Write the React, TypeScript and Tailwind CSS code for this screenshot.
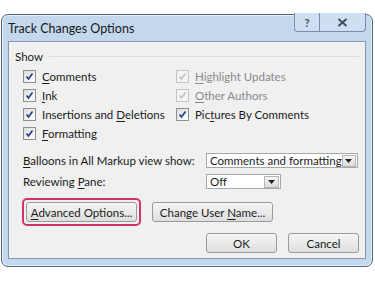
const font = { fontFamily: 'Lato, "Open Sans", sans-serif' };

function Check({ disabled }: { disabled?: boolean }) {
  return (
    <span
      className={
        "flex h-[13px] w-[13px] shrink-0 items-center justify-center border " +
        (disabled
          ? "border-[#c4c4c4] bg-[#f4f4f4]"
          : "border-[#8e8f8f] bg-gradient-to-br from-[#dcdcdc] to-[#ffffff]")
      }
    >
      <svg width="9" height="9" viewBox="0 0 9 9">
        <path
          d="M1.5 4.5 L3.5 7 L7.5 1.5"
          fill="none"
          stroke={disabled ? "#c2c2c2" : "#1e3a8a"}
          strokeWidth="1.6"
        />
      </svg>
    </span>
  );
}

function Row({
  pre,
  u,
  post,
  disabled,
}: {
  pre: string;
  u: string;
  post: string;
  disabled?: boolean;
}) {
  return (
    <div className="flex h-[19px] items-center gap-[6px] whitespace-nowrap">
      <Check disabled={disabled} />
      <span className={disabled ? "text-[#8a8a8a]" : "text-[#1b1b1b]"}>
        {pre}
        <span className="underline underline-offset-2">{u}</span>
        {post}
      </span>
    </div>
  );
}

function Btn({ children, className }: { children: React.ReactNode; className?: string }) {
  return (
    <button
      className={
        "flex h-[20px] items-center justify-center whitespace-nowrap rounded-[3px] border border-[#9a9a9a] bg-gradient-to-b from-[#f6f6f6] to-[#dedede] text-[#1b1b1b] " +
        (className ?? "")
      }
    >
      {children}
    </button>
  );
}

function Drop({ value, w }: { value: string; w: string }) {
  return (
    <div className={"flex h-[15px] items-center justify-between whitespace-nowrap border border-[#a7a7a7] bg-white pl-[3px] " + w}>
      <span className="leading-none">{value}</span>
      <span className="mr-[1px] flex h-[12px] w-[15px] items-center justify-center border border-[#b5b5b5] bg-gradient-to-b from-[#f4f4f4] to-[#dcdcdc]">
        <svg width="7" height="4" viewBox="0 0 7 4">
          <path d="M0 0 H7 L3.5 4 Z" fill="#222" />
        </svg>
      </span>
    </div>
  );
}

export default function App() {
  return (
    <div className="h-[281px] w-[375px] bg-white pl-[1px] pt-[14px] text-[11.5px] leading-[15px]" style={font}>
      <div className="flex h-[253px] w-[372px] flex-col rounded-[7px] border border-[#55657a] bg-[#c3d7ed] px-[6px] pb-[7px] shadow-[inset_0_0_0_1px_#e6eef8]">
        <div className="relative flex h-[26px] shrink-0 items-center pl-[0px] pt-[1px]">
          <span className="text-[12.5px] text-[#1a1a1a]">Track Changes Options</span>
          <div className="absolute right-[0px] top-[-2px] flex h-[19px]">
            <span className="flex w-[26px] items-center justify-center rounded-bl-[4px] border border-t-0 border-[#7c8ea5] bg-[#cfdff1] text-[11px] font-bold text-[#39475a]">
              ?
            </span>
            <span className="flex w-[46px] items-center justify-center rounded-br-[4px] border border-l-0 border-t-0 border-[#7c8ea5] bg-[#cfdff1]">
              <svg width="11" height="9" viewBox="0 0 11 9">
                <path d="M1.5 1 L9.5 8 M9.5 1 L1.5 8" stroke="#3c4a5e" strokeWidth="1.8" />
              </svg>
            </span>
          </div>
        </div>
        <div className="flex flex-1 flex-col border border-[#8797ac] bg-[#f0f0f0] px-[6px] pt-[7px] text-[#1b1b1b]">
          <div className="flex h-[15px] items-center gap-[6px]">
            <span>Show</span>
            <div className="h-px flex-1 bg-[#dcdcdc]" />
          </div>
          <div className="mt-[3px] flex pl-[8px]">
            <div className="flex w-[153px] flex-col">
              <Row pre="" u="C" post="omments" />
              <Row pre="" u="I" post="nk" />
              <Row pre="Insertions and " u="D" post="eletions" />
              <Row pre="" u="F" post="ormatting" />
            </div>
            <div className="flex flex-col">
              <Row pre="" u="H" post="ighlight Updates" disabled />
              <Row pre="" u="O" post="ther Authors" disabled />
              <Row pre="Pic" u="t" post="ures By Comments" />
            </div>
          </div>
          <div className="mt-[10px] flex flex-col gap-[6px] whitespace-nowrap pl-[8px]">
            <div className="flex h-[15px] items-center">
              <span className="w-[183px]">
                <span className="underline underline-offset-2">B</span>alloons in All Markup view show:
              </span>
              <Drop value="Comments and formatting" w="w-[152px]" />
            </div>
            <div className="flex h-[15px] items-center">
              <span className="w-[183px]">
                Reviewing <span className="underline underline-offset-2">P</span>ane:
              </span>
              <Drop value="Off" w="w-[75px]" />
            </div>
          </div>
          <div className="mt-[9px] flex items-center gap-[11px] pl-[7px]">
            <div className="rounded-[5px] border-2 border-[#d3326a] p-[2px]">
              <Btn className="w-[111px]">
                <span>
                  <span className="underline underline-offset-2">A</span>dvanced Options...
                </span>
              </Btn>
            </div>
            <Btn className="w-[121px]">
              <span>
                Change User <span className="underline underline-offset-2">N</span>ame...
              </span>
            </Btn>
          </div>
          <div className="mt-[7px] flex justify-end gap-[11px] pr-[0px]">
            <Btn className="w-[71px]">OK</Btn>
            <Btn className="w-[71px]">Cancel</Btn>
          </div>
        </div>
      </div>
    </div>
  );
}
